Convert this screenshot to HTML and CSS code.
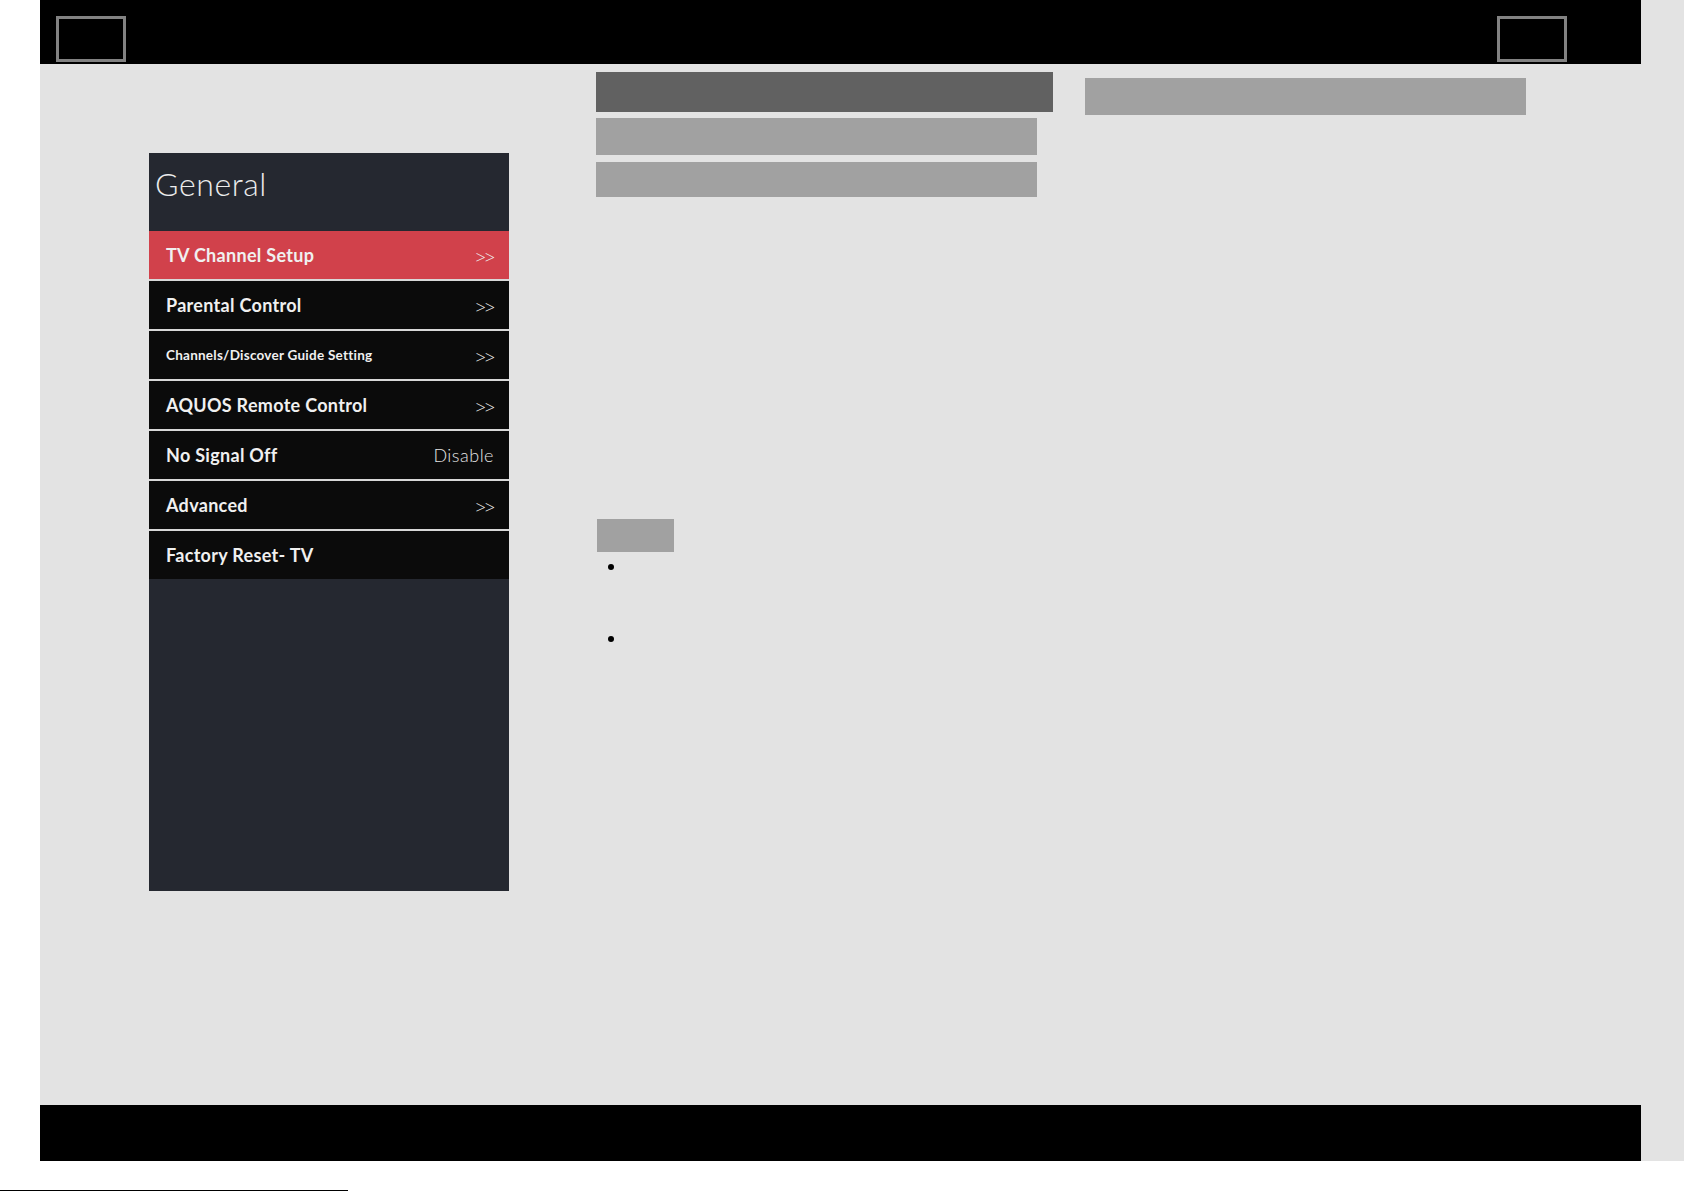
FILE: index.html
```html
<!DOCTYPE html>
<html lang="en">
<head>
<meta charset="utf-8">
<title>General</title>
<link rel="stylesheet" href="styles.css">
</head>
<body>
<div class="page">
  <header class="topbar">
    <div class="frame"></div>
    <div class="frame"></div>
  </header>

  <main class="main">
    <section class="menu">
      <h1 class="menu-title">General</h1>
      <ul class="menu-list">
        <li class="menu-item active"><span class="label">TV Channel Setup</span><span class="chev">&gt;&gt;</span></li>
        <li class="menu-item"><span class="label">Parental Control</span><span class="chev">&gt;&gt;</span></li>
        <li class="menu-item"><span class="label small">Channels/Discover Guide Setting</span><span class="chev">&gt;&gt;</span></li>
        <li class="menu-item"><span class="label">AQUOS Remote Control</span><span class="chev">&gt;&gt;</span></li>
        <li class="menu-item"><span class="label">No Signal Off</span><span class="value">Disable</span></li>
        <li class="menu-item"><span class="label">Advanced</span><span class="chev">&gt;&gt;</span></li>
        <li class="menu-item"><span class="label">Factory Reset- TV</span></li>
      </ul>
    </section>

    <section class="content">
      <div class="col-main">
        <div class="bar bar-dark"></div>
        <div class="bar bar-sub"></div>
        <div class="bar bar-sub2"></div>
        <div class="tag"></div>
        <ul class="bullets">
          <li class="bullet"></li>
          <li class="bullet"></li>
        </ul>
      </div>
      <div class="col-side">
        <div class="bar bar-side"></div>
      </div>
    </section>
  </main>

  <footer class="footbar"></footer>
</div>
<div class="rule"></div>
</body>
</html>
```

FILE: styles.css
```css
html, body {
  margin: 0;
  padding: 0;
  background: #ffffff;
  overflow: hidden;
}

body {
  font-family: Lato, "Open Sans", sans-serif;
}

.page {
  margin-left: 40px;
  width: 1644px;
  height: 1161px;
  background: #e3e3e3;
  display: flex;
  flex-direction: column;
}

/* top black bar with two outlined frames */
.topbar {
  width: 1601px;
  height: 64px;
  box-sizing: border-box;
  background: #000;
  display: flex;
  justify-content: space-between;
  align-items: flex-start;
  padding: 16px 74px 0 16px;
}

.frame {
  width: 70px;
  height: 46px;
  box-sizing: border-box;
  border: 3px solid #828282;
}

.main {
  flex: 1;
  display: flex;
  align-items: flex-start;
  padding-left: 109px;
}

/* settings menu panel */
.menu {
  margin-top: 89px;
  width: 360px;
  height: 738px;
  background: #252830;
  display: flex;
  flex-direction: column;
}

.menu-title {
  margin: 0;
  height: 78px;
  box-sizing: border-box;
  padding: 13px 0 0 6px;
  font-family: Lato, sans-serif;
  font-weight: 300;
  font-size: 32px;
  line-height: 36px;
  color: #ececec;
  letter-spacing: 0.6px;
}

.menu-list {
  list-style: none;
  margin: 0;
  padding: 0;
  display: flex;
  flex-direction: column;
  gap: 2px;
  background: #d8d8d8;
}

.menu-item {
  height: 48px;
  box-sizing: border-box;
  padding: 0 15px 0 17px;
  background: #0b0b0b;
  display: flex;
  align-items: center;
  justify-content: space-between;
  color: #f0f0f0;
}

.menu-item.active {
  background: #d1414b;
}

.label {
  font-size: 18px;
  font-weight: 700;
  letter-spacing: 0.3px;
}

.label.small {
  font-size: 13.5px;
  letter-spacing: 0.25px;
}

.chev {
  font-family: "Open Sans", sans-serif;
  font-size: 18px;
  font-weight: 300;
  padding-top: 3px;
  letter-spacing: -1px;
}

.value {
  font-size: 18px;
  font-weight: 300;
  color: #e4e4e4;
  letter-spacing: 0.5px;
}

/* right side placeholder blocks */
.content {
  margin-left: 87px;
  display: flex;
}

.col-main {
  padding-top: 8px;
  display: flex;
  flex-direction: column;
}

.bar { background: #a1a1a1; }

.bar-dark {
  width: 457px;
  height: 40px;
  background: #616161;
}

.bar-sub {
  width: 441px;
  height: 37px;
  margin-top: 6px;
}

.bar-sub2 {
  width: 441px;
  height: 35px;
  margin-top: 7px;
}

.tag {
  width: 77px;
  height: 33px;
  margin-top: 322px;
  margin-left: 1px;
  background: #a1a1a1;
}

.bullets {
  list-style: none;
  margin: 12px 0 0;
  padding: 0 0 0 12px;
}

.bullet {
  height: 72px;
}

.bullet::before {
  content: "";
  display: block;
  width: 6px;
  height: 6px;
  border-radius: 50%;
  background: #000;
}

.col-side {
  margin-left: 32px;
  padding-top: 14px;
}

.bar-side {
  width: 441px;
  height: 37px;
}

.footbar {
  width: 1601px;
  height: 56px;
  background: #000;
}

.rule {
  margin-top: 29px;
  width: 348px;
  height: 1px;
  background: #000;
}
```
